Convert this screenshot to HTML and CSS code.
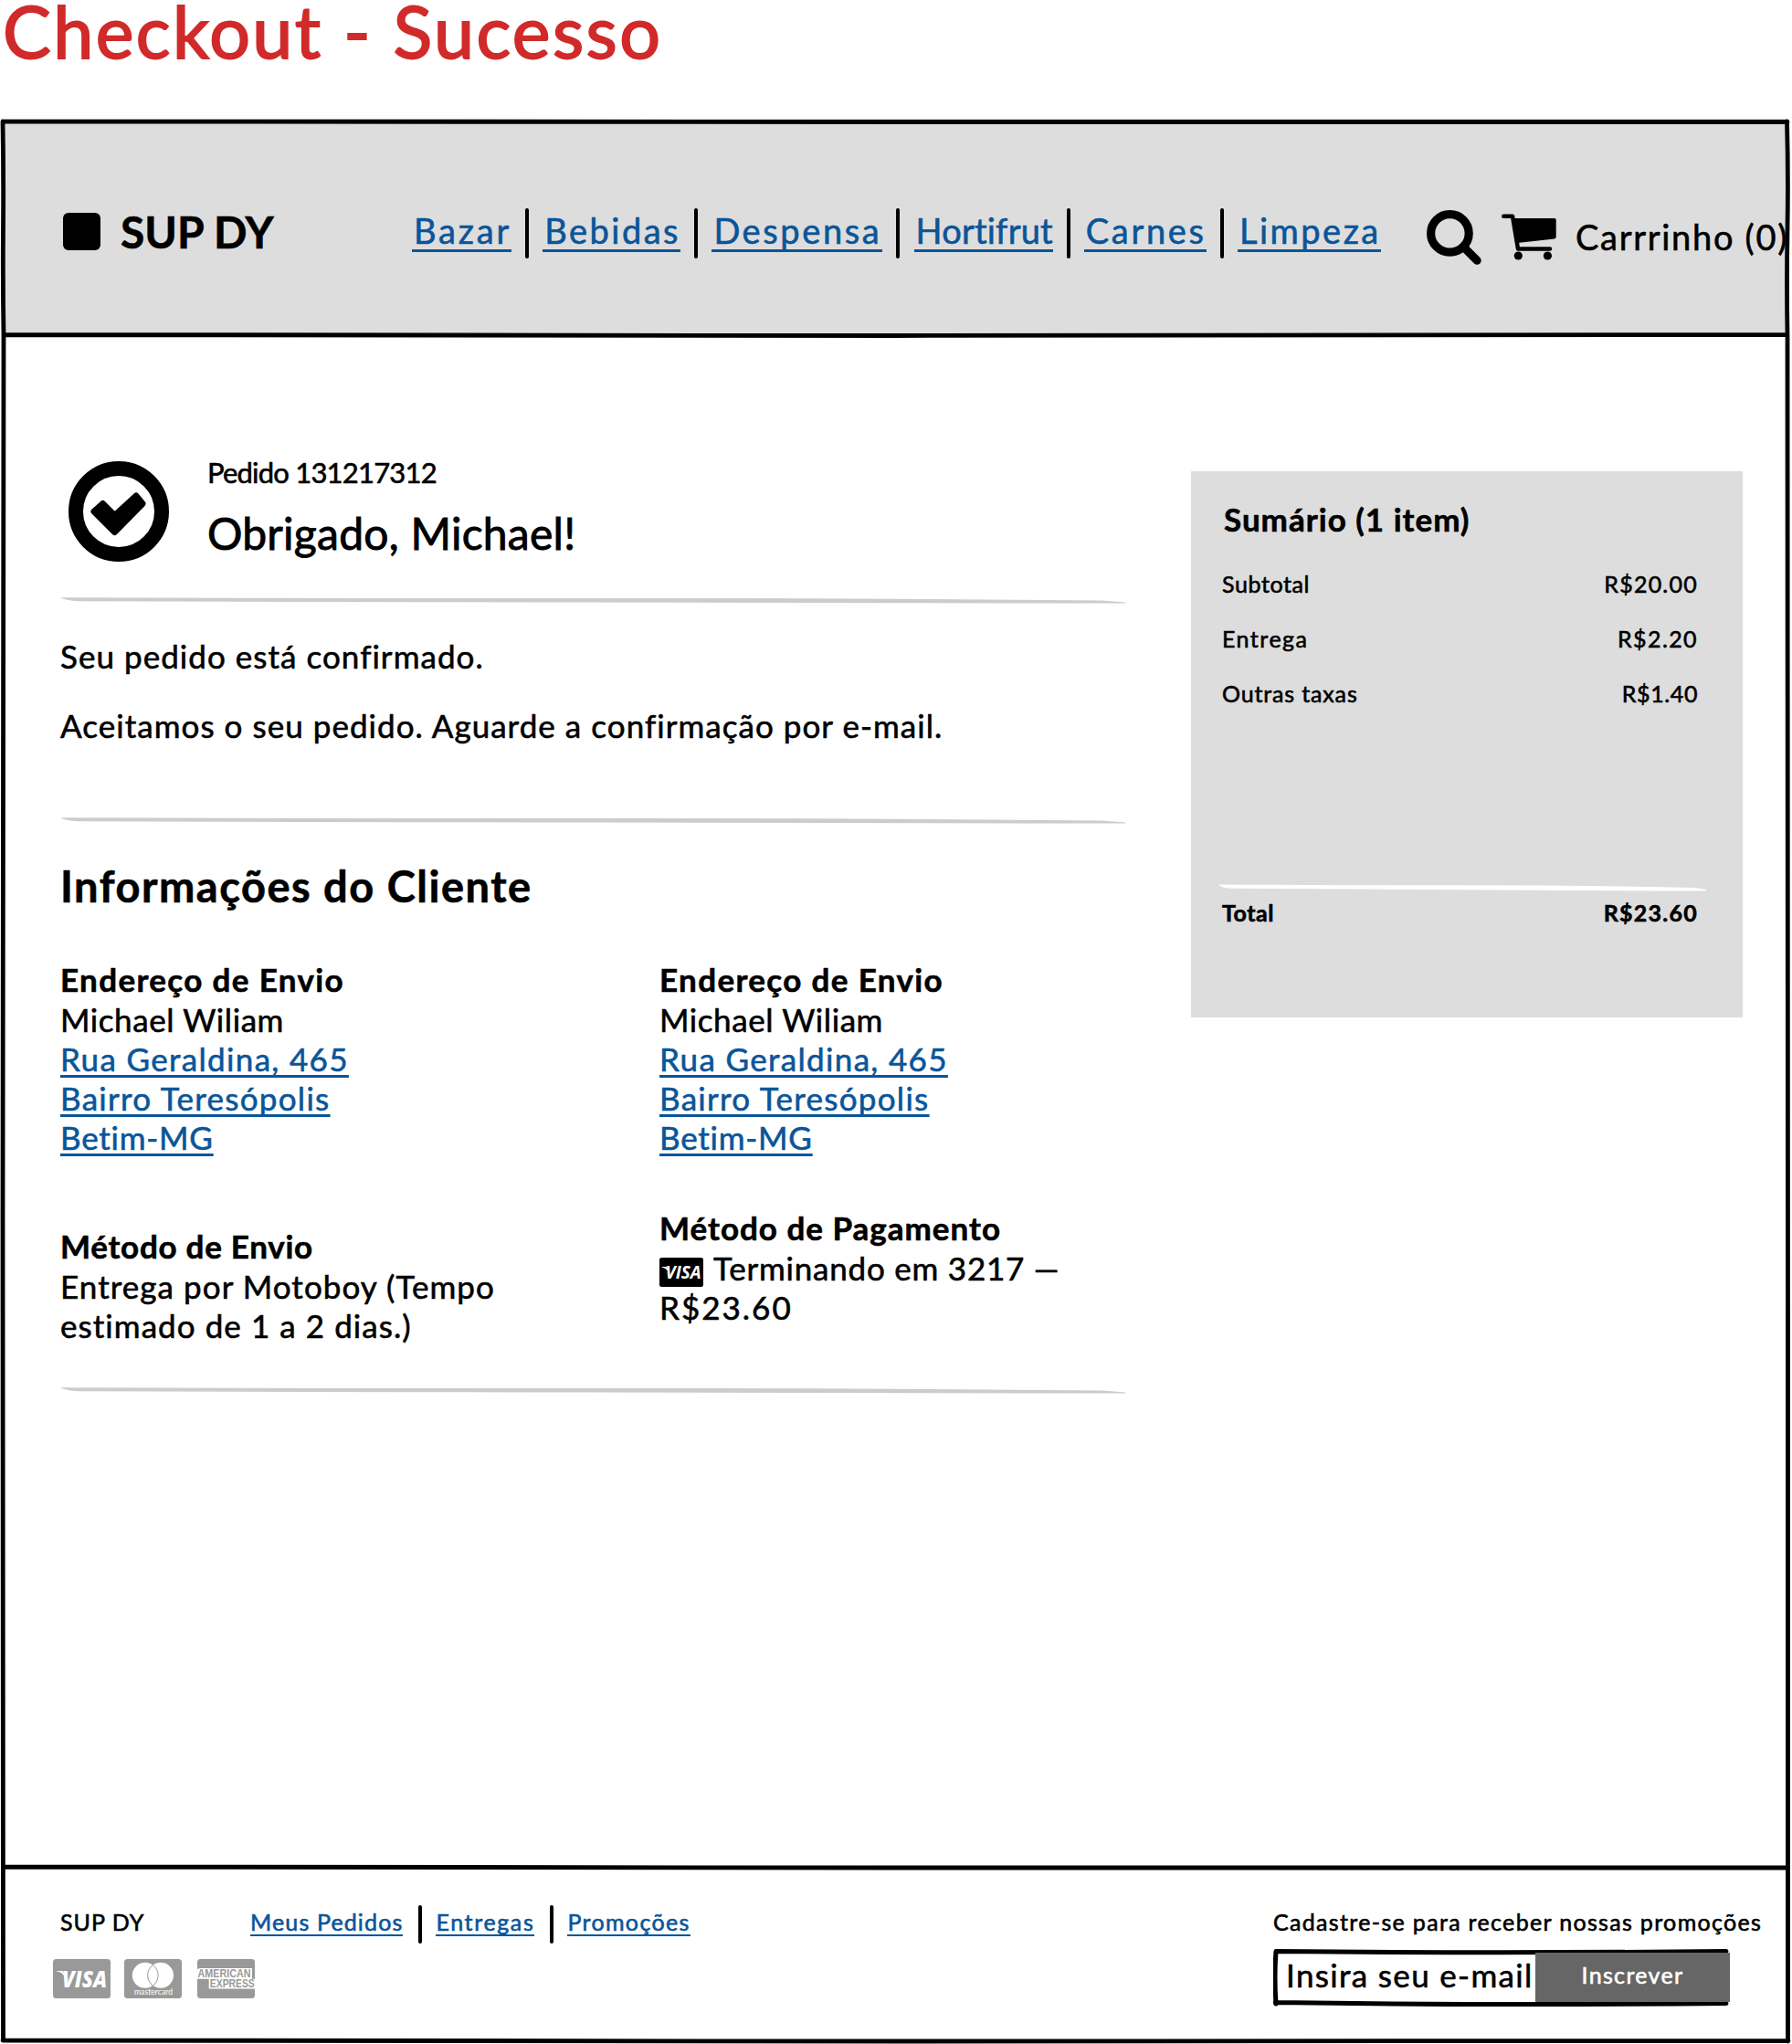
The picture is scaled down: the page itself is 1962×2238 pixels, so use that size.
FILE: index.html
```html
<!DOCTYPE html>
<html lang="pt-BR">
<head>
<meta charset="utf-8">
<title>Checkout - Sucesso</title>
<link rel="stylesheet" href="styles.css">
</head>
<body>
<h1 class="page-title"><span class="t-title">Checkout - Sucesso</span></h1>
<div class="window">
  <header class="header">
    <div class="brand"><span class="brand-mark"></span><span class="brand-name">SUP DY</span></div>
    <nav class="nav">
      <a class="t-n1">Bazar</a><i class="sep"></i>
      <a class="t-n2">Bebidas</a><i class="sep"></i>
      <a class="t-n3">Despensa</a><i class="sep"></i>
      <a class="t-n4">Hortifrut</a><i class="sep"></i>
      <a class="t-n5">Carnes</a><i class="sep"></i>
      <a class="t-n6">Limpeza</a>
    </nav>
    <div class="tools">
      <svg class="icon-search" viewBox="0 0 60 60"><circle cx="25.4" cy="25.4" r="20.8" fill="none" stroke="#000" stroke-width="9.2"/><path d="M42 42L55.200 55.200" stroke="#000" stroke-width="9" stroke-linecap="round"/></svg>
      <svg class="icon-cart" viewBox="0 0 60 52"><path d="M2.300 2.700H12L18 38.500H53" fill="none" stroke="#000" stroke-width="4.500" stroke-linecap="round" stroke-linejoin="round"/><path d="M11 5H58q1.700 0 1.700 1.700V25.500q0 1.700-1.700 2L19.500 31.800 15.500 35z"/><circle cx="18.300" cy="46" r="4.600"/><circle cx="50.400" cy="46" r="4.600"/></svg>
      <span class="cart-label">Carrrinho (0)</span>
    </div>
  </header>

  <main class="main">
    <section class="order">
      <div class="order-head">
        <svg class="icon-check" viewBox="0 0 110 110"><circle cx="55" cy="55" r="47" fill="#fff" stroke="#000" stroke-width="16"/><path d="M28 55L37.500 46.500 50.500 59.500 74 38 81 46.500 50.500 77.500z" stroke="#000" stroke-width="7" stroke-linejoin="round"/></svg>
        <div>
          <p class="order-number">Pedido 131217312</p>
          <p class="order-thanks">Obrigado, Michael!</p>
        </div>
      </div>
      <svg class="rule" viewBox="0 0 1166 8" preserveAspectRatio="none"><path d="M0 1.300Q300 2.300 583 2T1140 4.500L1166 6.500V7.500Q850 7 583 6.500T20 5.300Q5 4.500 0 1.300z"/></svg>
      <p class="message">Seu pedido está confirmado.</p>
      <p class="message message-2">Aceitamos o seu pedido. Aguarde a confirmação por e-mail.</p>
      <svg class="rule rule-2" viewBox="0 0 1166 8" preserveAspectRatio="none"><path d="M0 1.300Q300 2.300 583 2T1140 4.500L1166 6.500V7.500Q850 7 583 6.500T20 5.300Q5 4.500 0 1.300z"/></svg>
      <h2 class="section-title">Informações do Cliente</h2>
      <div class="info">
        <div class="info-col">
          <h3 class="t-end">Endereço de Envio</h3>
          <p class="t-mic">Michael Wiliam</p>
          <p><a class="t-rua">Rua Geraldina, 465</a></p>
          <p><a class="t-bai">Bairro Teresópolis</a></p>
          <p><a class="t-bet">Betim-MG</a></p>
          <h3 class="method t-met">Método de Envio</h3>
          <p class="t-ent">Entrega por Motoboy (Tempo<br>estimado de 1 a 2 dias.)</p>
        </div>
        <div class="info-col">
          <h3 class="t-end">Endereço de Envio</h3>
          <p class="t-mic">Michael Wiliam</p>
          <p><a class="t-rua">Rua Geraldina, 465</a></p>
          <p><a class="t-bai">Bairro Teresópolis</a></p>
          <p><a class="t-bet">Betim-MG</a></p>
          <h3 class="method method-pay t-pag">Método de Pagamento</h3>
          <p class="pay-line"><svg class="visa-inline" viewBox="0 0 48 32"><rect width="48" height="32" rx="2.500"/><path d="M2.500 10H8L12 19 9 14Q6 11 2.500 10.500z" fill="#fff"/><text x="6.500" y="23" textLength="39" lengthAdjust="spacingAndGlyphs" class="visa-text">VISA</text></svg><span class="t-ter">Terminando em 3217 —</span></p>
          <p class="t-val">R$23.60</p>
        </div>
      </div>
      <svg class="rule rule-3" viewBox="0 0 1166 8" preserveAspectRatio="none"><path d="M0 1.300Q300 2.300 583 2T1140 4.500L1166 6.500V7.500Q850 7 583 6.500T20 5.300Q5 4.500 0 1.300z"/></svg>
    </section>

    <aside class="summary">
      <h2>Sumário (1 item)</h2>
      <div class="row"><span class="t-sub">Subtotal</span><span class="t-r1">R$20.00</span></div>
      <div class="row"><span class="t-etg">Entrega</span><span class="t-r2">R$2.20</span></div>
      <div class="row"><span class="t-out">Outras taxas</span><span class="t-r3">R$1.40</span></div>
      <svg class="summary-rule" viewBox="0 0 1166 8" preserveAspectRatio="none"><path d="M0 .500Q300 1.300 583 1.300T1140 4L1166 6V7.500Q850 7 583 6.300T30 4.800Q5 3.800 0 .500z"/></svg>
      <div class="row total"><span class="t-tot">Total</span><span class="t-r1">R$23.60</span></div>
    </aside>
  </main>

  <footer class="footer">
    <div class="footer-left">
      <div class="footer-links">
        <span class="footer-brand">SUP DY</span>
        <a class="t-f1">Meus Pedidos</a><i class="sep"></i>
        <a class="t-f2">Entregas</a><i class="sep"></i>
        <a class="t-f3">Promoções</a>
      </div>
      <div class="cards">
        <svg class="card" viewBox="0 0 63 43"><rect width="63" height="43" rx="3.500"/><path d="M4 13H11L16 25 12 18Q9 14 4 13.600z" fill="#fff"/><text x="10" y="30.500" textLength="49" lengthAdjust="spacingAndGlyphs" class="card-visa">VISA</text></svg>
        <svg class="card card-mc" viewBox="0 0 63 43"><rect width="63" height="43" rx="3.500"/><circle cx="22.800" cy="17.800" r="14" fill="#fff"/><circle cx="40" cy="17.800" r="14" fill="#fff"/><path d="M31.400 6.500A14 14 0 0 1 31.400 29.100A14 14 0 0 1 31.400 6.500z" fill="#fff" stroke="#999" stroke-width="1"/><text x="11" y="38.800" textLength="42" lengthAdjust="spacingAndGlyphs" class="card-mc-text">mastercard</text></svg>
        <svg class="card card-amex" viewBox="0 0 63 43"><rect width="63" height="43" rx="3.500"/><path d="M0 11L3 10H60V21.800H63V32.500H12.700V21.800H0z" fill="#fff"/><text x=".5" y="19.800" textLength="58" lengthAdjust="spacingAndGlyphs" class="card-amex-text">AMERICAN</text><text x="13.800" y="31.300" textLength="49" lengthAdjust="spacingAndGlyphs" class="card-amex-text">EXPRESS</text></svg>
      </div>
    </div>
    <div class="signup">
      <p class="signup-label">Cadastre-se para receber nossas promoções</p>
      <div class="field">
        <svg class="field-frame" viewBox="0 0 500 63"><path d="M3.500 2.500Q250 5 496 2.500M3 2.500Q1 30 3 60M2 58.500Q250 62 496 59.500" /></svg>
        <span class="field-text">Insira seu e-mail</span>
        <span class="field-button">Inscrever</span>
      </div>
    </div>
  </footer>
  <svg class="frame" viewBox="0 0 1962 2108"><path d="M3 3Q500 2 980 3.500T1957 3.500M3 3Q4 60 3.500 120T4 237M4 236.500Q500 237.500 980 237.500T1957 236.500M1956.500 3Q1958 60 1957 120T1957 238M4 237Q3 800 3 1200T3.500 2104M1957 237Q1956.500 800 1957.500 1300T1957.500 2105M4 1914Q400 1913.500 980 1915T1957 1915M3 2104Q500 2105.500 980 2105T1958 2104.500"/></svg>
</div>
</body>
</html>
```
FILE: styles.css
```css
* { box-sizing: border-box; }
body {
  margin: 0; width: 1962px; height: 2238px; overflow: hidden; background: #fff; color: #000;
  font-family: Lato, "Liberation Sans", sans-serif; font-size: 35px; -webkit-text-stroke: .6px currentColor;
  font-variant-ligatures: none; white-space: nowrap;
}
h1, h2, h3, p { margin: 0; font-weight: 400; }
a { color: #0a5599; }
svg { display: block; flex: none; }
svg text { -webkit-text-stroke: 0; letter-spacing: 0; }

.page-title { height: 130px; padding-left: 3px; font-size: 79px; line-height: 67px; color: #d12a2a; letter-spacing: 2.4px; -webkit-text-stroke-width: 1.8px; }
.window { position: relative; height: 2108px; display: flex; flex-direction: column; }
.frame { position: absolute; left: 0; top: 0; width: 1962px; height: 2108px; fill: none; stroke: #000; stroke-width: 4.8px; stroke-linecap: round; pointer-events: none; }

/* Header */
.header { height: 238px; margin-left: 3px; width: 1954px; padding: 6px 0 0 66px; background: #ddd; display: flex; align-items: center; }
.header > * { flex: none; }
.brand { width: 382px; display: flex; align-items: center; gap: 22px; }
.brand-mark { width: 41px; height: 41px; border-radius: 6px; background: #000; margin-top: 2px; }
.brand-name { font-size: 48px; line-height: 60px; font-weight: 700; margin-top: 3px; }
.nav { width: 1061px; display: grid; grid-template-columns: 109px 4px 151px 4px 187px 4px 152px 4px 134px 4px 157px; justify-content: space-between; align-items: center; font-size: 38px; line-height: 46px; }
.nav a { border-bottom: 3px solid #0a5599; height: 47px; padding-left: 2px; }
.sep { display: block; width: 4px; height: 55px; border-radius: 2px; background: #000; }
.nav .sep { margin-top: 6px; }
.tools { display: flex; align-items: center; margin: 16px 0 0 50px; }
.icon-search { width: 60px; height: 60px; }
.icon-cart { width: 60px; height: 52px; margin: 0 21px 0 22px; }
.cart-label { font-size: 38px; line-height: 46px; margin-top: -3px; letter-spacing: 1.7px; }
.t-n1 { letter-spacing: 2.8px; }
.t-n2 { letter-spacing: 2.5px; }
.t-n3 { letter-spacing: 2.6px; }
.t-n4 { letter-spacing: .2px; }
.t-n5 { letter-spacing: 2.7px; }
.t-n6 { letter-spacing: 2.5px; }

/* Order confirmation */
.main { height: 1674px; padding: 129px 0 0 66px; display: flex; align-items: flex-start; gap: 72px; }
.order { width: 1166px; }
.order-head { display: flex; height: 156px; padding-left: 9px; }
.order-head > div { padding-left: 42px; }
.icon-check { width: 110px; height: 110px; margin-top: 8px; }
.order-number { font-size: 31px; line-height: 40px; margin-bottom: 17px; letter-spacing: -.8px; }
.order-thanks { font-size: 48px; line-height: 60px; letter-spacing: .25px; -webkit-text-stroke-width: .9px; }
.rule { width: 1166px; height: 8px; fill: #ccc; }
.message { line-height: 44px; margin-top: 35px; height: 42px; letter-spacing: 1.04px; }
.message-2 { margin-top: 34px; }
.rule-2 { margin-top: 80px; }
.section-title { margin-top: 38px; font-size: 47px; line-height: 60px; font-weight: 700; letter-spacing: 1.5px; }
.info { display: grid; grid-template-columns: 656px 1fr; margin-top: 51px; height: 467px; line-height: 43px; }
.info h3 { font-size: 35px; font-weight: 700; height: 44px; }
.info p { height: 43px; }
.info a { text-decoration: underline; text-decoration-thickness: 2.5px; text-underline-offset: 4px; text-decoration-skip-ink: none; }
.info .method { margin-top: 76px; }
.info .method-pay { margin-top: 55.600px; }
.pay-line { display: flex; }
.visa-inline { width: 48px; height: 32px; margin: 10px 11px 0 0; }
.visa-text { font: italic 700 19px "Open Sans", sans-serif; fill: #fff; }
.t-end { letter-spacing: 1.35px; }
.t-mic { letter-spacing: .58px; }
.t-rua { letter-spacing: 1.34px; }
.t-bai { letter-spacing: 1.29px; }
.t-bet { letter-spacing: .77px; }
.t-met { letter-spacing: .72px; }
.t-ent { letter-spacing: 1.06px; }
.t-pag { letter-spacing: .99px; }
.t-ter { letter-spacing: .78px; }
.t-val { letter-spacing: 2px; }

/* Summary */
.summary { width: 604px; height: 598px; margin-top: 19px; padding: 30px 49px 0 34px; background: #ddd; }
.summary h2 { font-size: 35px; line-height: 44px; font-weight: 700; padding-left: 2px; letter-spacing: 1px; }
.row { display: flex; justify-content: space-between; font-size: 25px; line-height: 32px; margin-top: 28px; }
.summary h2 + .row { margin-top: 33px; }
.summary-rule { width: 534px; height: 8px; margin: 193px 0 0 -4px; fill: #fff; }
.row.total { font-weight: 700; margin-top: 7px; }
.row.total span { font-weight: 700; }
.t-sub { letter-spacing: .6px; }
.t-r1 { letter-spacing: 1.24px; }
.t-etg { letter-spacing: 1.5px; }
.t-r2 { letter-spacing: 1.4px; }
.t-out { letter-spacing: .85px; }
.t-r3 { letter-spacing: .6px; }
.t-tot { letter-spacing: .54px; }

/* Footer */
.footer { flex: 1; padding: 46px 0 0 58px; display: flex; font-size: 25px; line-height: 32px; }
.footer-left { width: 1336px; }
.footer-links { display: flex; height: 32px; padding-left: 8px; }
.footer-brand { width: 208px; letter-spacing: 1px; }
.footer-links a { border-bottom: 2.500px solid #0a5599; height: 32px; }
.footer-links .sep { height: 42px; margin: -2px 15.500px 0 16.500px; }
.t-f1 { letter-spacing: 1.14px; }
.t-f2 { letter-spacing: 1.64px; }
.t-f3 { letter-spacing: 1.34px; }
.cards { display: flex; margin-top: 25px; }
.card { width: 63px; height: 43px; fill: #999; }
.card-mc { margin-left: 15px; }
.card-amex { margin-left: 17px; }
.card-visa { font: italic 800 25px "Open Sans", sans-serif; fill: #fff; }
.card-mc-text { font: 400 8.500px Lato, sans-serif; fill: #fff; }
.card-amex-text { font: 700 12px "Liberation Sans", sans-serif; fill: #999; }
.signup-label { letter-spacing: 1.33px; }
.field { position: relative; width: 500px; height: 63px; margin-top: 14px; display: flex; padding-top: 4px; }
.field-frame { position: absolute; left: 0; top: 0; width: 500px; height: 63px; fill: none; stroke: #000; stroke-width: 5px; stroke-linecap: round; }
.field-text { width: 287px; padding-left: 14px; font-size: 35px; line-height: 48px; letter-spacing: 1.34px; }
.field-button { position: relative; width: 213px; height: 54px; background: #666; color: #fff; text-align: center; line-height: 49px; letter-spacing: 1.35px; }
```
